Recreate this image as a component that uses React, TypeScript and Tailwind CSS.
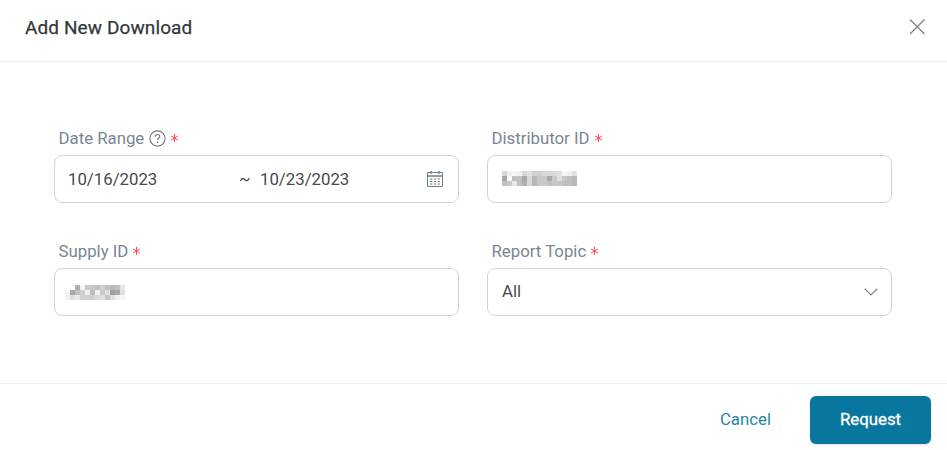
import React from "react";

const distributorMosaic = [
  ["#d8d8d8", "#eeeeee", "#f5f5f5", "#f0f0f0", "#d8d8d8", "#e0e0e0", "#d0d0d0", "#d0d0d0", "#d8d8d8", "#d8d8d8", "#d8d8d8", "#e0e0e0", "#f5f5f5", "#f0f0f0", "#e0e0e0"],
  ["#a8a8a8", "#fafafa", "#c0c0c0", "#c0c0c0", "#a8a8a8", "#d8d8d8", "#b8b8b8", "#c8c8c8", "#c8c8c8", "#a8a8a8", "#c8c8c8", "#e0e0e0", "#c8c8c8", "#c0c0c0", "#b8b8b8"],
  ["#c0c0c0", "#c8c8c8", "#e8e8e8", "#c0c0c0", "#b0b0b0", "#d8d8d8", "#b8b8b8", "#c8c8c8", "#c8c8c8", "#c0c0c0", "#c8c8c8", "#c8c8c8", "#c0c0c0", "#c0c0c0", "#b8b8b8"],
];

const supplyMosaic = [
  ["#ffffff", "#ffffff", "#b0b0b0", "#f5f5f5", "#c8c8c8", "#c8c8c8", "#c0c0c0", "#d0d0d0", "#c0c0c0", "#b8b8b8", "#c0c0c0", "#e8e8e8"],
  ["#f5f5f5", "#a8a8a8", "#c0c0c0", "#d0d0d0", "#f0f0f0", "#c0c0c0", "#f0f0f0", "#c8c8c8", "#e0e0e0", "#a0a0a0", "#a8a8a8", "#e0e0e0"],
  ["#f0f0f0", "#e0e0e0", "#e8e8e8", "#d0d0d0", "#d0d0d0", "#d0d0d0", "#d8d8d8", "#e0e0e0", "#c8c8c8", "#e0e0e0", "#f0f0f0", "#f5f5f5"],
];

function Mosaic({ rows }: { rows: string[][] }) {
  const w = rows[0].length * 5;
  return (
    <svg width={w} height={15} viewBox={`0 0 ${w} 15`} shapeRendering="crispEdges" className="block">
      {rows.map((row, y) =>
        row.map((c, x) => <rect key={`${x}-${y}`} x={x * 5} y={y * 5} width={5} height={5} fill={c} />)
      )}
    </svg>
  );
}

function Asterisk() {
  return (
    <svg width="9" height="10" viewBox="0 0 9 10" fill="none" stroke="#ff4d58" strokeWidth="1" className="block">
      <path d="M4.5 0.8v8.4M1 2.9l7 4.2M8 2.9L1 7.1" />
    </svg>
  );
}

function Field({ label, extra, children }: { label: string; extra?: React.ReactNode; children: React.ReactNode }) {
  return (
    <div className="flex flex-col">
      <div className="flex items-center h-[24px] pl-[4.5px] pb-[2px] mb-[4px] text-[16.8px] leading-[22px] text-[#788694]">
        <span>{label}</span>
        {extra}
        <span className="ml-[4px]">
          <Asterisk />
        </span>
      </div>
      <div className="flex items-center h-[48px] rounded-[8px] border border-[#ced4da] bg-white text-[16.8px] text-[#484b4e]">
        {children}
      </div>
    </div>
  );
}

export default function App() {
  return (
    <div className="flex flex-col w-[947px] h-[450px] bg-white font-['Roboto',sans-serif]">
      <header className="flex items-center justify-between h-[62px] pb-[4px] pl-[25px] pr-[21px] border-b border-[#eeeeee]">
        <h1 className="text-[19px] font-normal tracking-[0.1px] text-[#33373b] [-webkit-text-stroke:0.25px_#33373b]">Add New Download</h1>
        <svg width="18" height="18" viewBox="0 0 18 18" fill="none" stroke="#858b90" strokeWidth="1.5" className="block -mt-[4px]">
          <path d="M2 1.5l14.5 14.5M16.5 1.5L2 16" />
        </svg>
      </header>

      <main className="flex-1 grid grid-cols-[405px_405px] gap-x-[28px] gap-y-[37px] content-start pl-[54px] pt-[65px]">
        <Field
          label="Date Range"
          extra={
            <svg width="17" height="17" viewBox="0 0 17 17" fill="none" className="block ml-[4.5px]">
              <circle cx="8.5" cy="8.5" r="7.6" stroke="#6e757b" strokeWidth="1.1" />
              <path d="M6.2 6.8c0-1.4 1-2.3 2.3-2.3s2.3.9 2.3 2.1c0 1.7-2.3 1.7-2.3 3.5" stroke="#6e757b" strokeWidth="1.1" />
              <circle cx="8.5" cy="12.4" r="0.8" fill="#6e757b" />
            </svg>
          }
        >
          <span className="pl-[13px] w-[184px] pt-[2px]">10/16/2023</span>
          <span className="w-[21px] pt-[2px]">~</span>
          <span className="pt-[2px]">10/23/2023</span>
          <svg width="16" height="16" viewBox="0 0 16 16" fill="none" stroke="#6f7f8e" strokeWidth="1.1" className="block ml-auto mr-[15px]">
            <rect x="0.5" y="1.5" width="15" height="14" rx="1" />
            <path d="M0.5 5h15M4 0v3M12 0v3" strokeWidth="1.4" />
            <path d="M3 8h2.4M6.8 8h2.4M10.6 8h2.4M3 10.5h2.4M6.8 10.5h2.4M10.6 10.5h2.4M3 13h2.4M6.8 13h2.4M10.6 13h2.4" />
          </svg>
        </Field>

        <Field label="Distributor ID">
          <span className="pl-[14px] -mt-[2px]">
            <Mosaic rows={distributorMosaic} />
          </span>
        </Field>

        <Field label="Supply ID">
          <span className="pl-[10px]">
            <Mosaic rows={supplyMosaic} />
          </span>
        </Field>

        <Field label="Report Topic">
          <span className="pl-[14px]">All</span>
          <svg width="14" height="8" viewBox="0 0 14 8" fill="none" stroke="#75838f" strokeWidth="1.2" className="block ml-auto mr-[13px]">
            <path d="M0.7 0.8L7 7l6.3-6.2" />
          </svg>
        </Field>
      </main>

      <footer className="flex items-start justify-end h-[67px] border-t border-[#eeeeee] pt-[12px] pr-[16px]">
        <button className="h-[48px] text-[16.8px] text-[#2a84a4] mr-[39px]">Cancel</button>
        <button className="w-[121px] h-[48px] rounded-[6px] bg-[#08769e] text-[16.8px] font-normal text-white [-webkit-text-stroke:0.3px_#ffffff] shadow-sm">
          Request
        </button>
      </footer>
    </div>
  );
}
